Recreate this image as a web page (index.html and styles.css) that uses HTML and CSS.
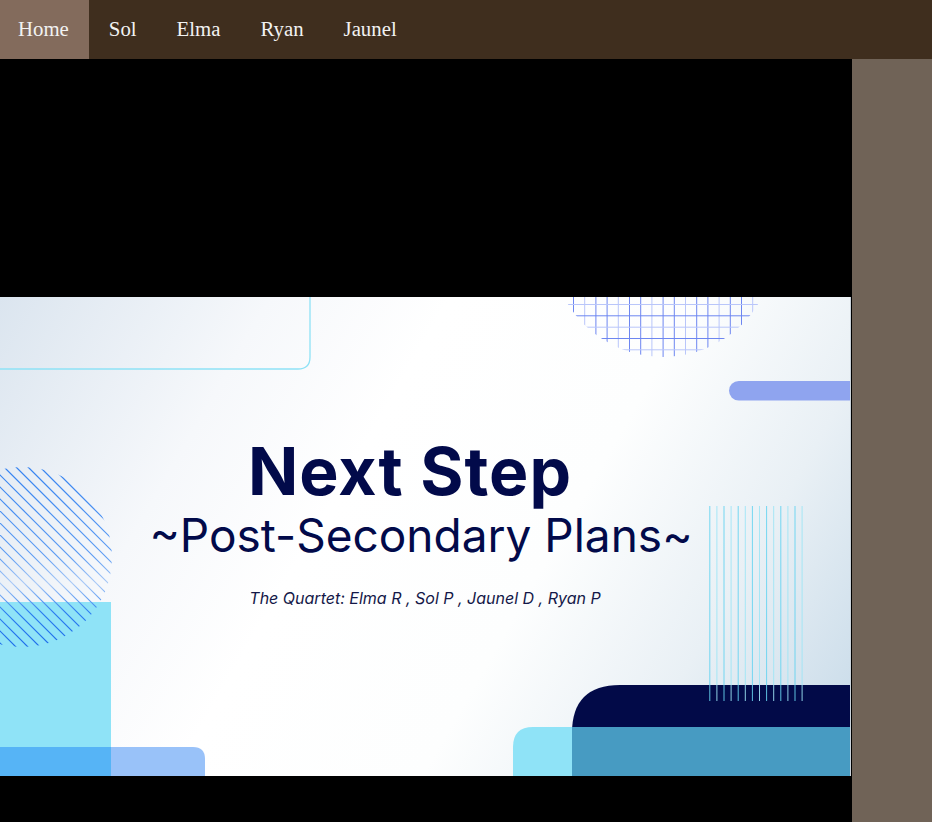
FILE: index.html
```html
<!DOCTYPE html>
<html lang="en">
  <head>
    <meta charset="UTF-8">
    <meta name="viewport" content="width=device-width, initial-scale=1.0">
    <title>Next Step</title>
    <link rel="stylesheet" href="styles.css">
  </head>
  <body>
    <nav class="topnav">
      <a href="#" class="active">Home</a>
      <a href="#">Sol</a>
      <a href="#">Elma</a>
      <a href="#">Ryan</a>
      <a href="#">Jaunel</a>
    </nav>

    <main class="embed">
      <section class="slide">
        <svg class="slide-art" viewBox="0 0 851 479" width="851" height="479" aria-hidden="true">
          <defs>
            <clipPath id="gridClip"><circle cx="663" cy="-52" r="112"/></clipPath>
            <clipPath id="hatchClip"><circle cx="22" cy="260" r="90"/></clipPath>
            <linearGradient id="hatchFade" x1="0" y1="0" x2="1" y2="1">
              <stop offset="0" stop-color="#2a7cf0"/>
              <stop offset="0.5" stop-color="#5d9cf3"/>
              <stop offset="0.62" stop-color="#a9c9f6"/>
              <stop offset="0.75" stop-color="#2a7cf0"/>
              <stop offset="1" stop-color="#1663e6"/>
            </linearGradient>
          </defs>

          <!-- top left outline panel -->
          <path d="M-10 -10 H310 V60 Q310 72 298 72 H-10" fill="none" stroke="#8fe2f6" stroke-width="1.3"/>

          <!-- grid half circle -->
          <g clip-path="url(#gridClip)" stroke-width="1">
            <g id="gridLines"></g>
          </g>

          <!-- pill -->
          <rect x="729" y="84" width="140" height="19.5" rx="9.75" fill="#8fa4ef"/>

          <!-- bottom left -->
          <rect x="0" y="305" width="111" height="180" fill="#8fe3f7"/>
          <path d="M0 450 H193 Q205 450 205 462 V485 H0 Z" fill="#99c2f9"/>
          <rect x="0" y="450" width="111" height="35" fill="#56b4f6"/>
          <g clip-path="url(#hatchClip)">
            <g id="hatchLines" stroke="url(#hatchFade)" stroke-width="1.2"></g>
          </g>

          <!-- bottom right -->
          <path d="M572 436 Q572 388 620 388 H860 V485 H572 Z" fill="#020a48"/>
          <path d="M513 450 Q513 430 533 430 H860 V485 H513 Z" fill="#8fe3f7"/>
          <rect x="572" y="430" width="290" height="55" fill="#479bc2"/>
          <g id="barLines" stroke-width="1"></g>
        </svg>

        <div class="slide-text">
          <h1 class="title">Next Step</h1>
          <h2 class="subtitle">~Post-Secondary Plans~</h2>
          <p class="credits">The Quartet: Elma R , Sol P , Jaunel D , Ryan P</p>
        </div>
      </section>
    </main>

    <script>
      // decorative line sets on the slide
      const NS = 'http://www.w3.org/2000/svg';

      function addLine(parent, x1, y1, x2, y2, stroke, opacity) {
        const l = document.createElementNS(NS, 'line');
        l.setAttribute('x1', x1);
        l.setAttribute('y1', y1);
        l.setAttribute('x2', x2);
        l.setAttribute('y2', y2);
        if (stroke) l.setAttribute('stroke', stroke);
        if (opacity) l.setAttribute('opacity', opacity);
        parent.appendChild(l);
      }

      const grid = document.getElementById('gridLines');
      for (let i = 0; i < 17; i++) {
        const x = 573.5 + i * 11.2;
        addLine(grid, x, -10, x, 70, i % 3 === 1 ? '#b9c6fa' : '#6d86f1');
      }
      [7.5, 18.8, 30.2, 41.5, 52.8].forEach((y, i) => {
        addLine(grid, 540, y, 790, y, i % 2 === 0 ? '#b9c6fa' : '#6d86f1');
      });

      const hatch = document.getElementById('hatchLines');
      for (let c = -400; c < 200; c += 12) {
        addLine(hatch, c, 150, c + 220, 370);
      }

      const bars = document.getElementById('barLines');
      for (let i = 0; i < 14; i++) {
        const x = 709.8 + i * 7.1;
        addLine(bars, x, 209, x, 404, i % 2 === 0 ? '#67d4f1' : '#9fe6f7', 0.9);
      }
    </script>
  </body>
</html>
```

FILE: styles.css
```css
* {
  margin: 0;
  padding: 0;
  box-sizing: border-box;
}

body {
  background-color: #706357;
  font-family: 'Liberation Serif', serif;
}

.topnav {
  display: flex;
  height: 59px;
  background-color: #3f2e1e;
}

.topnav a {
  display: block;
  padding: 0 20px;
  line-height: 58px;
  font-size: 20.8px;
  color: #f2f2f2;
  text-decoration: none;
}

.topnav a:first-child {
  padding-left: 18px;
}

.topnav a.active {
  background-color: #836b5c;
}

.embed {
  width: 852px;
  height: 955px;
  background-color: #000;
  display: flex;
  align-items: center;
}

.slide {
  position: relative;
  width: 851px;
  height: 479px;
  overflow: hidden;
  background: linear-gradient(120deg, #dbe5ef 0%, #f6f8fb 24%, #ffffff 40%, #fdfefe 62%, #e9f0f5 80%, #c5d9e8 100%);
  border-right: 1px solid #c9d2da;
}

.slide-art {
  position: absolute;
  top: 0;
  left: 0;
}

.slide-text {
  position: relative;
  display: flex;
  flex-direction: column;
  align-items: center;
  padding-top: 136px;
  color: #020a4a;
  font-family: Inter, sans-serif;
}

.title {
  font-size: 66px;
  font-weight: 700;
  line-height: 76px;
  letter-spacing: 1px;
  margin-left: -30px;
}

.subtitle {
  font-size: 46px;
  font-weight: 400;
  line-height: 52px;
  margin-right: 8px;
}

.credits {
  margin-top: 27px;
  font-size: 16px;
  font-style: italic;
  color: #141848;
}
```
